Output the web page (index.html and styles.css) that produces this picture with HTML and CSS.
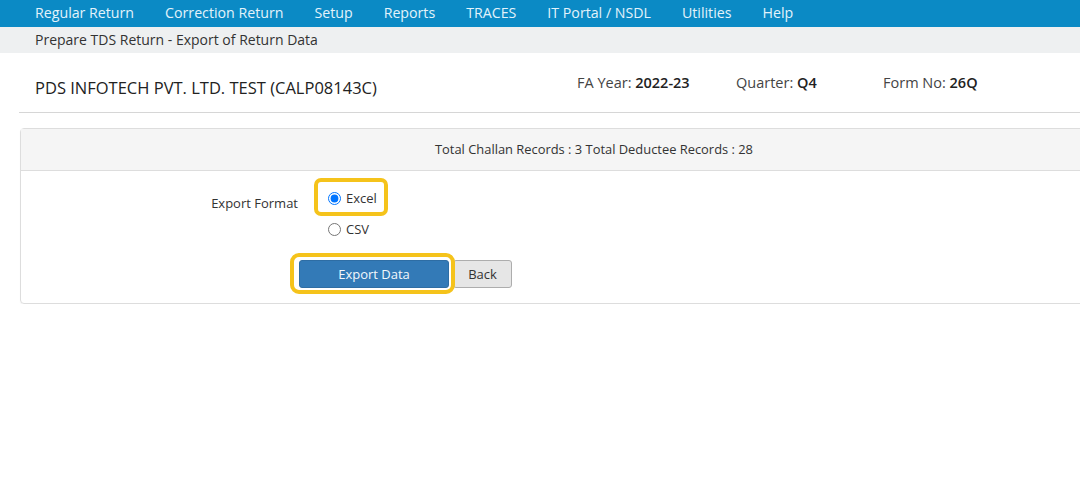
FILE: index.html
```html
<!DOCTYPE html>
<html lang="en">
<head>
    <meta charset="utf-8">
    <link rel="stylesheet" href="styles.css">
    <title>Export of Return Data</title>
</head>
<body>
    <div class="page">

        <!--TOP MENU-->
        <div class="menu">
            <a class="menu-item">Regular Return</a>
            <a class="menu-item">Correction Return</a>
            <a class="menu-item">Setup</a>
            <a class="menu-item">Reports</a>
            <a class="menu-item">TRACES</a>
            <a class="menu-item">IT Portal / NSDL</a>
            <a class="menu-item">Utilities</a>
            <a class="menu-item">Help</a>
        </div>

        <div class="crumb">Prepare TDS Return - Export of Return Data</div>

        <!--DEDUCTOR DETAILS-->
        <div class="title-row">
            <div class="company">PDS INFOTECH PVT. LTD. TEST (CALP08143C)</div>
            <div class="info info-year">FA Year: <b>2022-23</b></div>
            <div class="info info-quarter">Quarter: <b>Q4</b></div>
            <div class="info">Form No: <b>26Q</b></div>
        </div>

        <!--EXPORT PANEL-->
        <div class="panel">
            <div class="panel-heading">Total Challan Records : 3 Total Deductee Records : 28</div>
            <div class="panel-body">
                <div class="form-row">
                    <div class="form-label">Export Format</div>
                    <div class="options">
                        <label class="option marked">
                            <input type="radio" name="format" checked> Excel
                        </label>
                        <label class="option">
                            <input type="radio" name="format"> CSV
                        </label>
                    </div>
                </div>
                <div class="actions">
                    <button class="btn btn-primary marked-btn">Export Data</button>
                    <button class="btn btn-default">Back</button>
                </div>
            </div>
        </div>

    </div>
</body>
</html>
```

FILE: styles.css
```css
html, body{
    margin: 0;
    overflow: hidden;
}
body{
    font-family: "Open Sans", "Noto Sans", sans-serif;
    font-size: 13px;
    color: #333;
    background-color: #fff;
}
.page{
    width: 1080px;
    overflow: hidden;
}
.menu{
    display: flex;
    height: 27px;
    align-items: center;
    padding-left: 19.5px;
    padding-bottom: 3px;
    box-sizing: border-box;
    background-color: #0b8ac5;
}
.menu-item{
    padding: 0 15.5px;
    font-size: 14.2px;
    color: #e3f3fb;
    white-space: nowrap;
}
.crumb{
    height: 26px;
    line-height: 26px;
    padding-left: 35px;
    font-size: 14px;
    color: #333;
    background-color: #eef0f1;
}
.title-row{
    display: flex;
    align-items: center;
    height: 59px;
    margin-left: 19px;
    padding-left: 16px;
    border-bottom: 1px solid #d6d6d6;
}
.company{
    width: 542px;
    font-size: 16.5px;
    color: #222;
    padding-top: 9px;
}
.info{
    font-size: 14.5px;
    color: #444;
}
.info b{
    font-weight: 600;
    color: #222;
}
.info-year{
    width: 159px;
}
.info-quarter{
    width: 147px;
}
.panel{
    width: 1146px;
    margin: 15px 0 0 20px;
    border: 1px solid #ddd;
    border-radius: 4px;
    box-shadow: 0 1px 1px rgba(0, 0, 0, 0.05);
}
.panel-heading{
    height: 41px;
    line-height: 41px;
    text-align: center;
    font-size: 12.9px;
    color: #333;
    background-color: #f5f5f5;
    border-bottom: 1px solid #ddd;
}
.panel-body{
    padding: 16px 0 15px 0;
}
.form-row{
    display: flex;
}
.form-label{
    width: 277px;
    text-align: right;
    padding-top: 7px;
    color: #333;
}
.options{
    display: flex;
    flex-direction: column;
    align-items: flex-start;
    gap: 13px;
    padding-left: 25px;
    padding-top: 2px;
}
.option{
    position: relative;
    display: flex;
    align-items: center;
    gap: 2px;
    font-size: 13px;
    color: #333;
}
.option input{
    margin: 0 3px 0 5px;
    width: 13px;
    height: 13px;
}
.marked::after{
    content: "";
    position: absolute;
    left: -9px;
    right: -11px;
    top: -11px;
    bottom: -9px;
    border: 4px solid #f5c31b;
    border-radius: 7px;
}
.actions{
    display: flex;
    gap: 4px;
    margin: 22px 0 0 278px;
}
.btn{
    height: 28px;
    font-family: inherit;
    font-size: 13px;
    border-radius: 3px;
    cursor: pointer;
}
.btn-primary{
    position: relative;
    width: 150px;
    color: #f2f7fc;
    background-color: #337ab7;
    border: 1px solid #2e6da4;
}
.marked-btn::after{
    content: "";
    position: absolute;
    left: -10px;
    right: -7px;
    top: -8px;
    bottom: -7px;
    border: 4px solid #f5c31b;
    border-radius: 9px;
}
.btn-default{
    width: 59px;
    color: #333;
    background-color: #e6e6e6;
    border: 1px solid #adadad;
}
```
